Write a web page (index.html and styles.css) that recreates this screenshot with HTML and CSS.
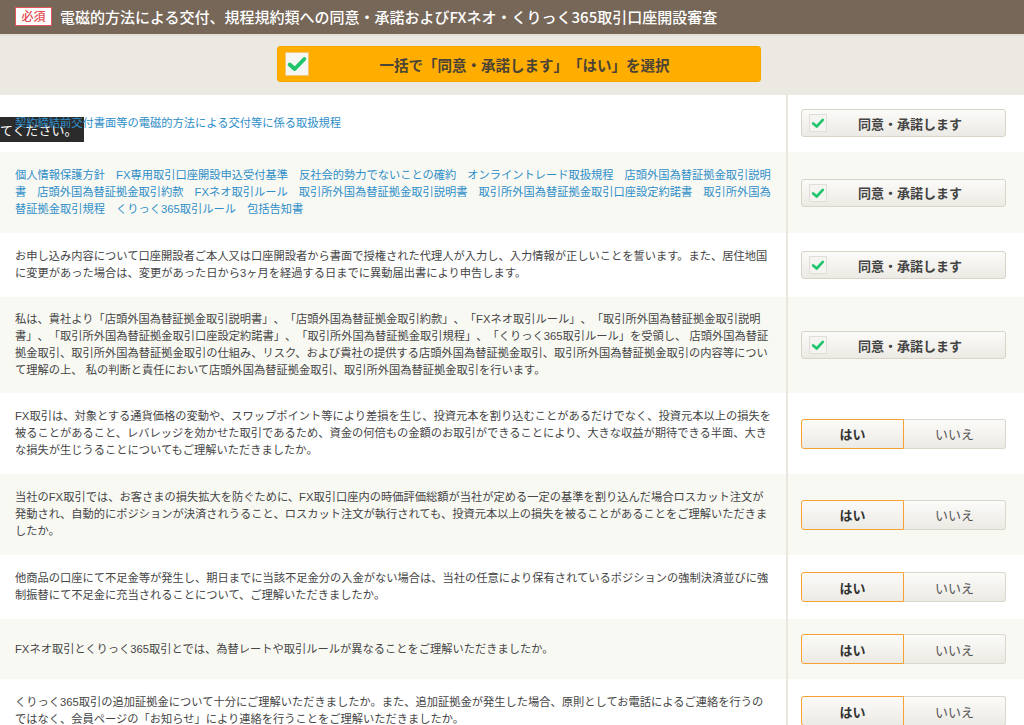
FILE: index.html
```html
<!DOCTYPE html>
<html lang="ja">
<head>
<meta charset="utf-8">
<title>同意・承諾</title>
<link rel="stylesheet" href="styles.css">
</head>
<body>
<div class="page">
  <header class="sec-head">
    <span class="badge">必須</span>
    <h2 class="sec-title">電磁的方法による交付、規程規約類への同意・承諾およびFXネオ・くりっく365取引口座開設審査</h2>
  </header>

  <div class="bulk">
    <button class="bulk-btn" type="button">
      <span class="bulk-check"><svg viewBox="0 0 24 24" width="22" height="22"><path d="M4 12.5 L9.5 17.5 L20 6.5" fill="none" stroke="#1fc46b" stroke-width="4.2" stroke-linecap="round" stroke-linejoin="round"/></svg></span>
      <span class="bulk-label">一括で「同意・承諾します」「はい」を選択</span>
    </button>
  </div>

  <div class="rows">
    <div class="row first">
      <div class="q"><a class="doc" href="#">契約締結前交付書面等の電磁的方法による交付等に係る取扱規程</a></div>
      <div class="a">
        <button class="agree" type="button"><span class="mini-check"><svg viewBox="0 0 16 16" width="14" height="14"><path d="M2.5 8.5 L6.5 12 L13.5 4.5" fill="none" stroke="#1fc46b" stroke-width="3" stroke-linecap="round" stroke-linejoin="round"/></svg></span><span class="agree-label">同意・承諾します</span></button>
      </div>
    </div>

    <div class="row alt">
      <div class="q links"><a href="#">個人情報保護方針</a><a href="#">FX専用取引口座開設申込受付基準</a><a href="#">反社会的勢力でないことの確約</a><a href="#">オンライントレード取扱規程</a><a href="#">店頭外国為替証拠金取引説明書</a><a href="#">店頭外国為替証拠金取引約款</a><a href="#">FXネオ取引ルール</a><a href="#">取引所外国為替証拠金取引説明書</a><a href="#">取引所外国為替証拠金取引口座設定約諾書</a><a href="#">取引所外国為替証拠金取引規程</a><a href="#">くりっく365取引ルール</a><a href="#">包括告知書</a></div>
      <div class="a">
        <button class="agree" type="button"><span class="mini-check"><svg viewBox="0 0 16 16" width="14" height="14"><path d="M2.5 8.5 L6.5 12 L13.5 4.5" fill="none" stroke="#1fc46b" stroke-width="3" stroke-linecap="round" stroke-linejoin="round"/></svg></span><span class="agree-label">同意・承諾します</span></button>
      </div>
    </div>

    <div class="row">
      <div class="q">お申し込み内容について口座開設者ご本人又は口座開設者から書面で授権された代理人が入力し、入力情報が正しいことを誓います。また、居住地国に変更があった場合は、変更があった日から3ヶ月を経過する日までに異動届出書により申告します。</div>
      <div class="a">
        <button class="agree" type="button"><span class="mini-check"><svg viewBox="0 0 16 16" width="14" height="14"><path d="M2.5 8.5 L6.5 12 L13.5 4.5" fill="none" stroke="#1fc46b" stroke-width="3" stroke-linecap="round" stroke-linejoin="round"/></svg></span><span class="agree-label">同意・承諾します</span></button>
      </div>
    </div>

    <div class="row alt tall">
      <div class="q">私は、貴社より「店頭外国為替証拠金取引説明書」、「店頭外国為替証拠金取引約款」、「FXネオ取引ルール」、「取引所外国為替証拠金取引説明書」、「取引所外国為替証拠金取引口座設定約諾書」、「取引所外国為替証拠金取引規程」、「くりっく365取引ルール」を受領し、 店頭外国為替証拠金取引、取引所外国為替証拠金取引の仕組み、リスク、および貴社の提供する店頭外国為替証拠金取引、取引所外国為替証拠金取引の内容等について理解の上、 私の判断と責任において店頭外国為替証拠金取引、取引所外国為替証拠金取引を行います。</div>
      <div class="a">
        <button class="agree" type="button"><span class="mini-check"><svg viewBox="0 0 16 16" width="14" height="14"><path d="M2.5 8.5 L6.5 12 L13.5 4.5" fill="none" stroke="#1fc46b" stroke-width="3" stroke-linecap="round" stroke-linejoin="round"/></svg></span><span class="agree-label">同意・承諾します</span></button>
      </div>
    </div>

    <div class="row">
      <div class="q">FX取引は、対象とする通貨価格の変動や、スワップポイント等により差損を生じ、投資元本を割り込むことがあるだけでなく、投資元本以上の損失を被ることがあること、レバレッジを効かせた取引であるため、資金の何倍もの金額のお取引ができることにより、大きな収益が期待できる半面、大きな損失が生じうることについてもご理解いただきましたか。</div>
      <div class="a"><div class="yn"><button class="yes" type="button">はい</button><button class="no" type="button">いいえ</button></div></div>
    </div>

    <div class="row alt">
      <div class="q">当社のFX取引では、お客さまの損失拡大を防ぐために、FX取引口座内の時価評価総額が当社が定める一定の基準を割り込んだ場合ロスカット注文が発動され、自動的にポジションが決済されうること、ロスカット注文が執行されても、投資元本以上の損失を被ることがあることをご理解いただきましたか。</div>
      <div class="a"><div class="yn"><button class="yes" type="button">はい</button><button class="no" type="button">いいえ</button></div></div>
    </div>

    <div class="row">
      <div class="q">他商品の口座にて不足金等が発生し、期日までに当該不足金分の入金がない場合は、当社の任意により保有されているポジションの強制決済並びに強制振替にて不足金に充当されることについて、ご理解いただきましたか。</div>
      <div class="a"><div class="yn"><button class="yes" type="button">はい</button><button class="no" type="button">いいえ</button></div></div>
    </div>

    <div class="row alt">
      <div class="q">FXネオ取引とくりっく365取引とでは、為替レートや取引ルールが異なることをご理解いただきましたか。</div>
      <div class="a"><div class="yn"><button class="yes" type="button">はい</button><button class="no" type="button">いいえ</button></div></div>
    </div>

    <div class="row">
      <div class="q">くりっく365取引の追加証拠金について十分にご理解いただきましたか。また、追加証拠金が発生した場合、原則としてお電話によるご連絡を行うのではなく、会員ページの「お知らせ」により連絡を行うことをご理解いただきましたか。</div>
      <div class="a"><div class="yn"><button class="yes" type="button">はい</button><button class="no" type="button">いいえ</button></div></div>
    </div>
  </div>

  <div class="tooltip">てください。</div>
</div>
</body>
</html>
```

FILE: styles.css
```css
* { box-sizing: border-box; }

html, body {
  margin: 0;
  padding: 0;
  background: #ffffff;
  overflow: hidden;
}

body {
  font-family: "Noto Sans CJK JP", "Noto Sans", sans-serif;
  color: #444444;
  text-spacing-trim: space-all;
}

.page {
  position: relative;
  width: 1024px;
}

.sec-head {
  display: flex;
  align-items: center;
  height: 36px;
  padding-left: 15px;
  padding-bottom: 2px;
  background: #766759;
  border-bottom: 2px solid #e2dfd7;
}

.badge {
  display: inline-flex;
  align-items: center;
  justify-content: center;
  width: 37px;
  height: 19px;
  background: #ffffff;
  border: 1px solid #e2555a;
  color: #e24a4f;
  font-size: 12px;
  font-weight: 500;
  line-height: 1;
}

.sec-title {
  margin: 0 0 0 8px;
  font-size: 15px;
  font-weight: 500;
  color: #ffffff;
  line-height: 1;
  white-space: nowrap;
}

.bulk {
  display: flex;
  justify-content: center;
  padding: 10px 0 13px;
  background: #ebe9e2;
  height: 59px;
}

.bulk-btn {
  display: flex;
  align-items: center;
  width: 484px;
  height: 36px;
  margin-left: 14px;
  padding: 0 0 0 7px;
  background: #ffae00;
  border: 1px solid #f5a600;
  border-radius: 3px;
  font-family: inherit;
  cursor: pointer;
}

.bulk-check {
  display: flex;
  align-items: center;
  justify-content: center;
  width: 24px;
  height: 24px;
  background: #f6f7f5;
  border: 1px solid #f0c77a;
}

.bulk-label {
  flex: 1;
  padding-right: 20px;
  text-align: center;
  font-size: 14.5px;
  font-weight: 700;
  color: #4a4336;
}

.rows {
  display: flex;
  flex-direction: column;
}

.row {
  display: grid;
  grid-template-columns: 786px 1fr;
  background: #ffffff;
}

.row.alt {
  background: #f9f9f4;
}

.q {
  align-self: center;
  padding: 15px 15px;
  font-family: "Liberation Sans", "Noto Sans CJK JP", sans-serif;
  font-size: 11.25px;
  line-height: 17px;
  color: #454545;
}

.row.tall .q {
  padding-top: 14px;
  padding-bottom: 14px;
}

.q a {
  color: #2e8ec8;
  text-decoration: none;
}

.q a.doc {
  position: relative;
  z-index: 2;
}

.links a {
  margin-right: 11px;
}

.a {
  display: flex;
  align-items: center;
  padding: 15px 19px 15px 13px;
  border-left: 2px solid #ebe7df;
}

.row.first .a {
  padding-top: 14px;
  padding-bottom: 15px;
}

.row.tall .a {
  padding-top: 14px;
  padding-bottom: 14px;
}

.agree {
  display: flex;
  align-items: center;
  width: 205px;
  height: 28px;
  padding: 0 0 0 7px;
  background: linear-gradient(#fbfbf9, #eceae4);
  border: 1px solid #d9d3c8;
  border-radius: 3px;
  font-family: inherit;
  cursor: pointer;
}

.mini-check {
  display: flex;
  align-items: center;
  justify-content: center;
  width: 18px;
  height: 18px;
  background: #f4f4f1;
  border: 1px solid #e3ded5;
}

.agree-label {
  flex: 1;
  padding-right: 12px;
  text-align: center;
  font-size: 13px;
  font-weight: 700;
  color: #444444;
}

.yn {
  display: flex;
  width: 205px;
  height: 30px;
}

.yn button {
  flex: 1;
  font-family: inherit;
  font-size: 13px;
  cursor: pointer;
  background: linear-gradient(#fbfbf9, #eceae4);
}

.yes {
  border: 1px solid #f7a133;
  border-radius: 3px 0 0 3px;
  font-weight: 700;
  color: #333333;
}

.no {
  border: 1px solid #dcd7cc;
  border-left: none;
  border-radius: 0 3px 3px 0;
  color: #555555;
}

.tooltip {
  position: absolute;
  z-index: 1;
  left: 0;
  top: 117px;
  height: 25px;
  padding: 0 6px 0 0;
  display: flex;
  align-items: center;
  background: #2b2b2b;
  color: #ffffff;
  font-size: 13px;
  white-space: nowrap;
}
```
